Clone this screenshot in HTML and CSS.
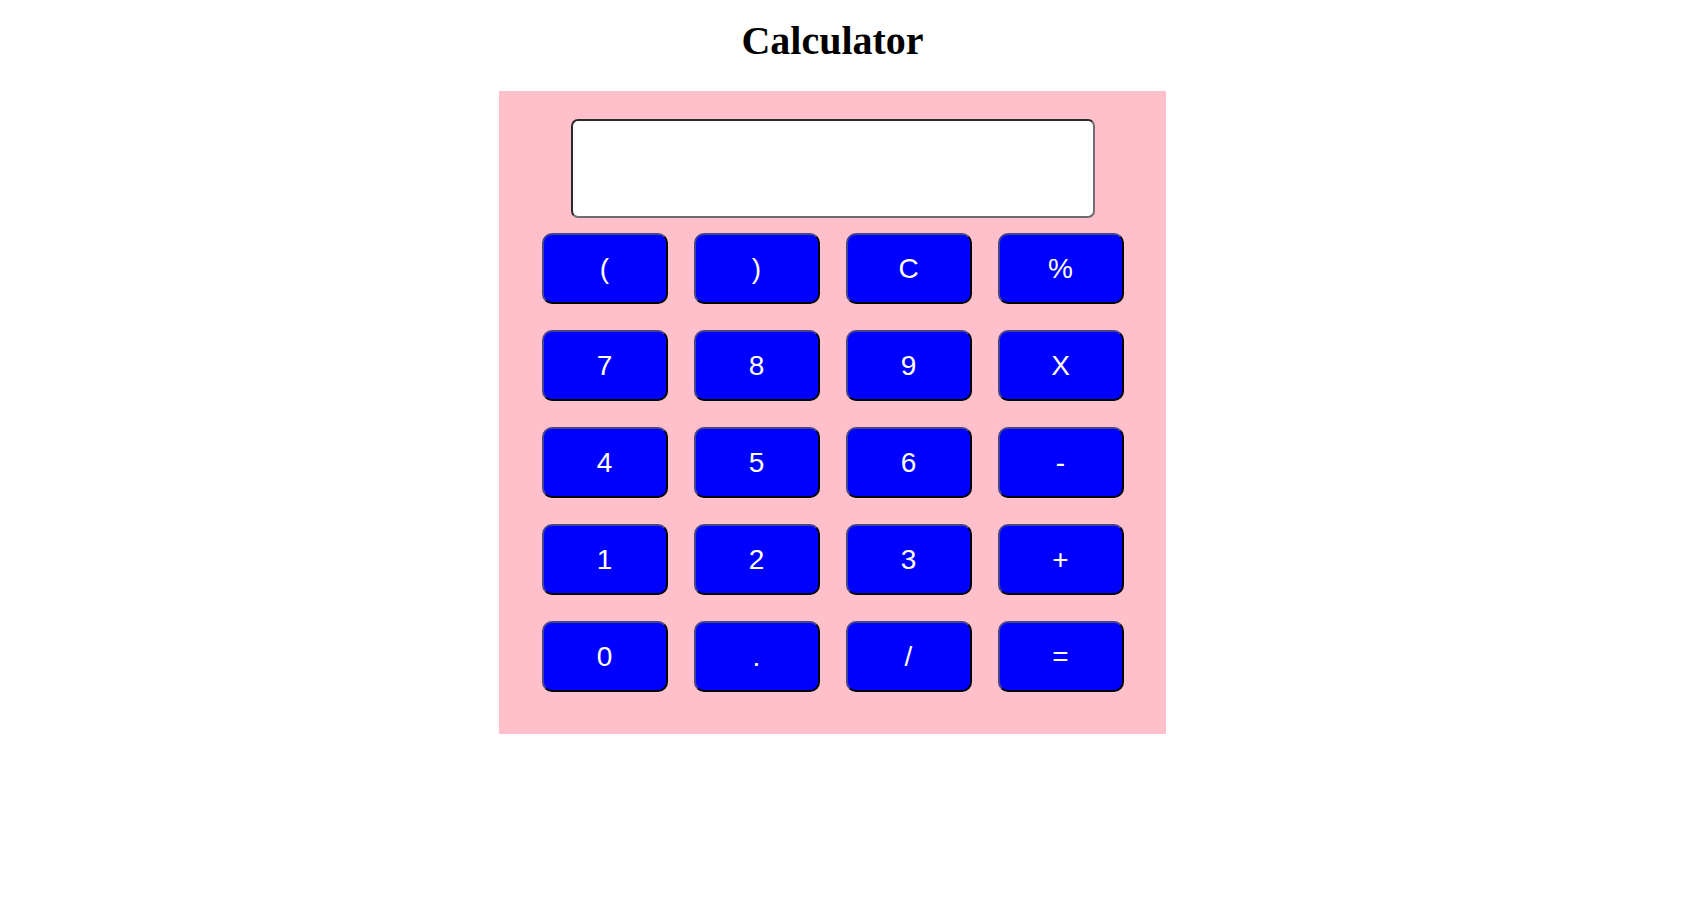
FILE: index.html
```html
<!DOCTYPE html>
<html lang="en">
<head>
<meta charset="utf-8">
<title>Calculator</title>
<link rel="stylesheet" href="styles.css">
</head>
<body>
<div class="page">
  <h1 class="title">Calculator</h1>
  <div class="calc">
    <input class="display" type="text">
    <div class="keys">
      <button class="key">(</button>
      <button class="key">)</button>
      <button class="key">C</button>
      <button class="key">%</button>
      <button class="key">7</button>
      <button class="key">8</button>
      <button class="key">9</button>
      <button class="key">X</button>
      <button class="key">4</button>
      <button class="key">5</button>
      <button class="key">6</button>
      <button class="key">-</button>
      <button class="key">1</button>
      <button class="key">2</button>
      <button class="key">3</button>
      <button class="key">+</button>
      <button class="key">0</button>
      <button class="key">.</button>
      <button class="key">/</button>
      <button class="key">=</button>
    </div>
  </div>
</div>
</body>
</html>
```

FILE: styles.css
```css
html, body {
  margin: 0;
  padding: 0;
  background: #ffffff;
}

.page {
  width: 1665px;
  text-align: center;
}

.title {
  font-family: "Liberation Serif", "Times New Roman", serif;
  font-weight: bold;
  font-size: 40px;
  line-height: 46px;
  margin: 0;
  padding: 18px 0 27px;
  color: #000;
}

.calc {
  width: 667px;
  box-sizing: border-box;
  margin: 0 auto;
  padding: 28px 42px 42px;
  background: #ffc0cb;
  display: flex;
  flex-direction: column;
  align-items: center;
  gap: 15px;
}

.display {
  box-sizing: border-box;
  width: 524px;
  height: 99px;
  margin: 0;
  padding: 0 8px;
  background: #fff;
  border: 2px solid;
  border-color: #2a2a2a #6e6e6e #6e6e6e #2a2a2a;
  border-radius: 7px;
  font-family: "Liberation Sans", Arial, sans-serif;
  font-size: 28px;
  outline: none;
}

.keys {
  display: grid;
  grid-template-columns: repeat(4, 126px);
  grid-auto-rows: 71px;
  column-gap: 26px;
  row-gap: 26px;
}

.key {
  box-sizing: border-box;
  margin: 0;
  padding: 0;
  background: #0000ff;
  color: #ffffff;
  border: 2px solid;
  border-color: #45458a #000000 #000000 #45458a;
  border-radius: 10px;
  font-family: "Liberation Sans", Arial, sans-serif;
  font-size: 28px;
  line-height: 1;
  cursor: pointer;
}
```
